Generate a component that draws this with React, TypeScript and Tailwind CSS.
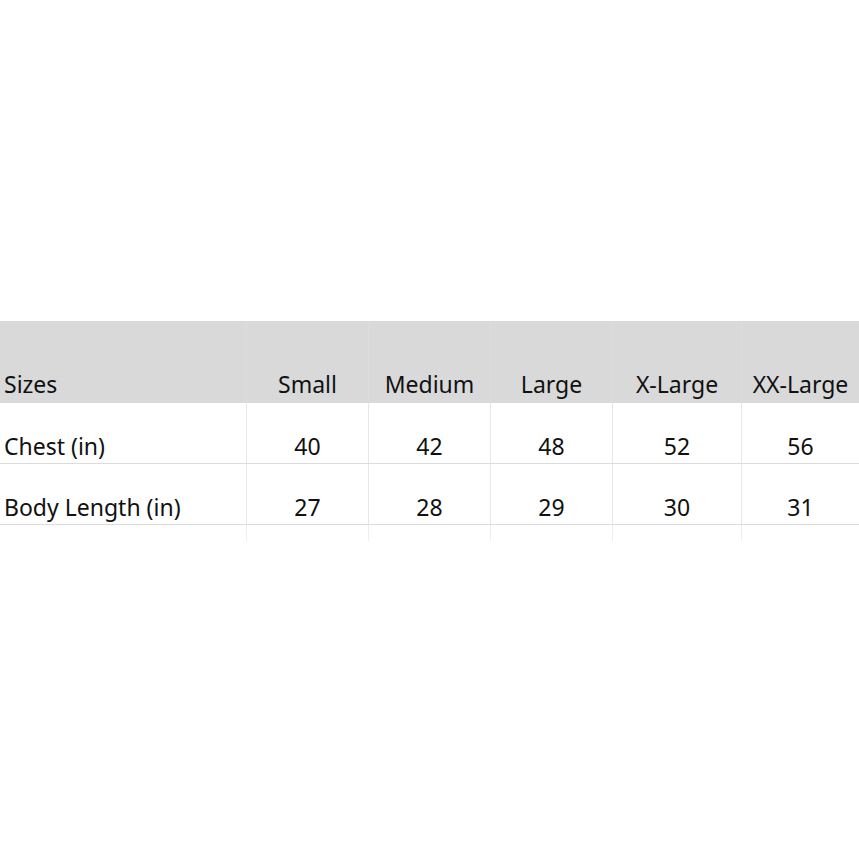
const sizes = ['Small', 'Medium', 'Large', 'X-Large', 'XX-Large'];

const rows = [
  { label: 'Chest (in)', values: ['40', '42', '48', '52', '56'] },
  { label: 'Body Length (in)', values: ['27', '28', '29', '30', '31'] },
];

const cols = 'grid grid-cols-[247px_122px_122px_122px_129px_1fr]';

export default function App() {
  return (
    <div className="w-[859px] h-[859px] bg-white overflow-hidden text-[#111] text-[23px] font-['Noto_Sans',sans-serif]">
      <div className="mt-[321px]">
        {/* header band */}
        <div className={`${cols} h-[82px] bg-[#d9d9d9]`}>
          <div className="flex items-end pl-[4px] pb-[2px] border-r border-[#dcdcdc]">Sizes</div>
          {sizes.map((s, i) => (
            <div
              key={s}
              className={`flex items-end justify-center pb-[2px] ${i < sizes.length - 1 ? 'border-r border-[#dcdcdc]' : ''}`}
            >
              {s}
            </div>
          ))}
        </div>

        {rows.map((r) => (
          <div key={r.label} className={`${cols} h-[61px] border-b border-[#dcdcdc]`}>
            <div className="flex items-end pl-[4px] pb-0 border-r border-[#e6e6e6]">{r.label}</div>
            {r.values.map((v, i) => (
              <div
                key={i}
                className={`flex items-end justify-center pb-0 ${i < r.values.length - 1 ? 'border-r border-[#e6e6e6]' : ''}`}
              >
                {v}
              </div>
            ))}
          </div>
        ))}

        {/* trailing strip, column rules only */}
        <div className={`${cols} h-[16px]`}>
          {[0, 1, 2, 3, 4, 5].map((i) => (
            <div key={i} className={i < 5 ? 'border-r border-[#eeeeee]' : ''} />
          ))}
        </div>
      </div>
    </div>
  );
}
